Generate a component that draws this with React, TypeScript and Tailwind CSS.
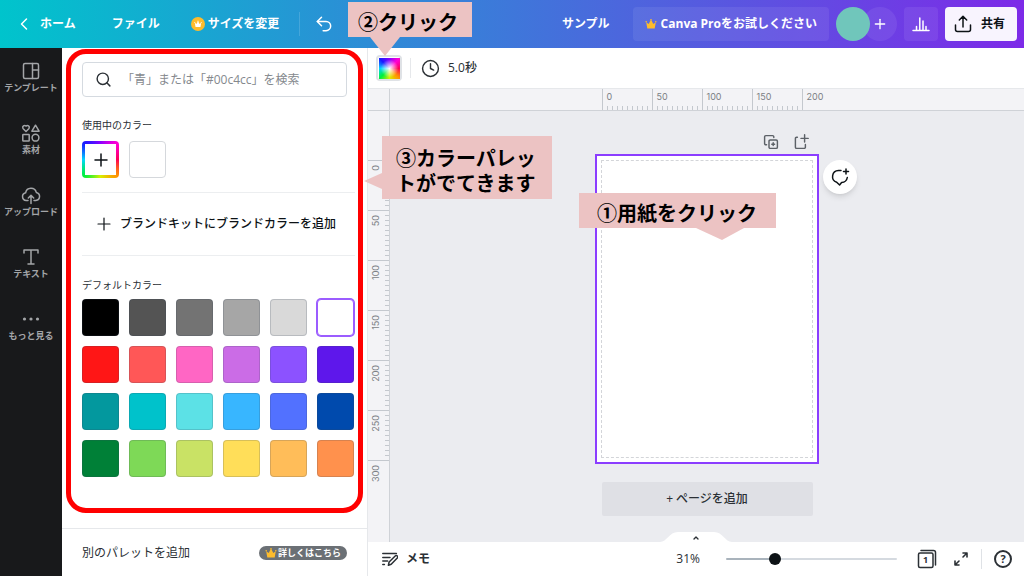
import type { ReactNode } from "react";
import { ChevronLeft, ChevronUp, Clock, Plus, Search, Undo2 } from "lucide-react";
import clsx from "clsx";

const spectrum =
  "bg-[conic-gradient(#8a00ff,#ff00d4_45deg,#ff0055_90deg,#ff9500_135deg,#d8f000_180deg,#00f03c_225deg,#00d5ff_270deg,#1a1aff_315deg,#8a00ff)]";

const rulerText = "font-[Inter,sans-serif] text-[9px] leading-4 text-[#7b7f85]";

const defaultColors = [
  { name: "ブラック", className: "bg-black" },
  { name: "ダークグレー", className: "bg-[#545454]" },
  { name: "グレー", className: "bg-[#737373]" },
  { name: "ミディアムグレー", className: "bg-[#a6a6a6]" },
  { name: "ライトグレー", className: "bg-[#d9d9d9]" },
  { name: "ホワイト", className: "bg-white", selected: true },
  { name: "レッド", className: "bg-[#ff1616]" },
  { name: "コーラルレッド", className: "bg-[#ff5757]" },
  { name: "ピンク", className: "bg-[#ff66c4]" },
  { name: "マゼンタ", className: "bg-[#cb6ce6]" },
  { name: "パープル", className: "bg-[#8c52ff]" },
  { name: "バイオレット", className: "bg-[#5e17eb]" },
  { name: "ダークターコイズ", className: "bg-[#03989e]" },
  { name: "アクアブルー", className: "bg-[#00c2cb]" },
  { name: "ターコイズブルー", className: "bg-[#5ce1e6]" },
  { name: "ライトブルー", className: "bg-[#38b6ff]" },
  { name: "ロイヤルブルー", className: "bg-[#5271ff]" },
  { name: "コバルトブルー", className: "bg-[#004aad]" },
  { name: "グリーン", className: "bg-[#008037]" },
  { name: "グラスグリーン", className: "bg-[#7ed957]" },
  { name: "ライム", className: "bg-[#c9e265]" },
  { name: "イエロー", className: "bg-[#ffde59]" },
  { name: "ピーチ", className: "bg-[#ffbd59]" },
  { name: "オレンジ", className: "bg-[#ff914d]" },
];

const navItems: { label: string; icon: ReactNode }[] = [
  {
    label: "テンプレート",
    icon: (
      <>
        <rect x="2.5" y="2.5" width="15" height="15" rx="1.5" />
        <path d="M11.5 2.5v15M11.5 9h6" />
      </>
    ),
  },
  {
    label: "素材",
    icon: (
      <>
        <path d="M5 8.5 2 5.4a1.9 1.9 0 0 1 3-2.3 1.9 1.9 0 0 1 3 2.3zM14.5 2.2l3.6 6h-7.2z" />
        <rect x="1.8" y="11.5" width="6.4" height="6.4" rx=".5" />
        <circle cx="14.5" cy="14.7" r="3.4" />
      </>
    ),
  },
  {
    label: "アップロード",
    icon: (
      <path d="M7 15.5H5.2a3.9 3.9 0 0 1-.6-7.7 5.5 5.5 0 0 1 10.7-.4 4.1 4.1 0 0 1-.5 8.1H13M10 18.5v-8M7.3 13 10 10.3l2.7 2.7" />
    ),
  },
  {
    label: "テキスト",
    icon: <path d="M3 6V3h14v3M10 3v14M7 17h6" />,
  },
  {
    label: "もっと見る",
    icon: (
      <g fill="currentColor" stroke="none">
        <circle cx="3.5" cy="10" r="1.6" />
        <circle cx="10" cy="10" r="1.6" />
        <circle cx="16.5" cy="10" r="1.6" />
      </g>
    ),
  },
];

function Icon({ className, children }: { className?: string; children: ReactNode }) {
  return (
    <svg
      viewBox="0 0 20 20"
      className={clsx("shrink-0", className)}
      fill="none"
      stroke="currentColor"
      strokeWidth="1.5"
      strokeLinecap="round"
      strokeLinejoin="round"
      aria-hidden="true"
    >
      {children}
    </svg>
  );
}

function Crown({ className }: { className?: string }) {
  return (
    <svg viewBox="0 0 12 12" className={clsx("shrink-0", className)} fill="currentColor" aria-hidden="true">
      <path d="M2.3 10.5 1.2 4.2l2.5 1.9L6 1.6l2.3 4.5 2.5-1.9-1.1 6.3z" />
      <circle cx="1.2" cy="3.8" r=".8" />
      <circle cx="6" cy="1.7" r=".8" />
      <circle cx="10.8" cy="3.8" r=".8" />
    </svg>
  );
}

function Callout({
  className,
  pointer,
  children,
}: {
  className: string;
  pointer: ReactNode;
  children: ReactNode;
}) {
  return (
    <div
      className={clsx(
        "absolute z-30 bg-[#ecc3c3] text-xl font-bold whitespace-nowrap text-black",
        className
      )}
    >
      {children}
      {pointer}
    </div>
  );
}

function Header() {
  return (
    <header className="flex h-12 items-center justify-between bg-[linear-gradient(to_right,#00c4cc,#7d2ae8)] pr-[7px] pl-3.5 text-xs font-bold text-white">
      <nav className="flex items-center">
        <a href="#home" className="flex items-center gap-1.5">
          <ChevronLeft className="size-5" strokeWidth={1.8} />
          ホーム
        </a>
        <button type="button" className="ml-9">
          ファイル
        </button>
        <button type="button" className="ml-8 flex items-center gap-1">
          <span className="flex size-3 items-center justify-center rounded-full bg-[#fdbc2c] ring-1 ring-[#fdbc2c]">
            <Crown className="size-2" />
          </span>
          サイズを変更
        </button>
        <span className="ml-5 h-6 w-px bg-white/15" />
        <button type="button" aria-label="元に戻す" className="ml-3.5">
          <Undo2 className="size-5" strokeWidth={1.8} />
        </button>
      </nav>

      <div className="flex items-center gap-[7px]">
        <span className="mr-4">サンプル</span>
        <button
          type="button"
          className="flex h-[34px] items-center gap-1 rounded bg-white/7 px-3"
        >
          <Crown className="size-3 text-[#fdbc2c]" />
          Canva Proをお試しください
        </button>
        <div className="flex">
          <span className="z-10 size-[34px] rounded-full bg-[#70c6bb]" />
          <button
            type="button"
            aria-label="メンバーを追加"
            className="-ml-[7px] flex size-[34px] items-center justify-center rounded-full bg-white/7"
          >
            <Plus className="size-4" />
          </button>
        </div>
        <button
          type="button"
          aria-label="インサイト"
          className="flex size-[34px] items-center justify-center rounded bg-white/7"
        >
          <Icon className="size-5">
            <path d="M2 16.5h16M5.500 16.5v-4M8.800 16.500V4M12 16.500V7M15 16.500v-4" />
          </Icon>
        </button>
        <button
          type="button"
          className="flex h-[34px] items-center gap-2 rounded bg-[#f8f4fe] px-2 pr-3 text-[#0d1216]"
        >
          <Icon className="size-5">
            <path d="M2.500 11v4.500a2 2 0 0 0 2 2h11a2 2 0 0 0 2-2V11M10 13V2.500M6.300 6 10 2.300 13.700 6" />
          </Icon>
          共有
        </button>
      </div>
    </header>
  );
}

function Sidebar() {
  return (
    <nav className="flex w-[62px] shrink-0 flex-col bg-[#18191b] pt-[13px]">
      {navItems.map((item) => (
        <button
          key={item.label}
          type="button"
          className="flex h-[62px] flex-col items-center gap-px text-[#a3a5a8]"
        >
          <Icon className="size-5">{item.icon}</Icon>
          <span className="text-[9px] leading-3 font-bold">{item.label}</span>
        </button>
      ))}
    </nav>
  );
}

function ColorPanel() {
  return (
    <aside className="flex w-[306px] shrink-0 flex-col border-r border-[#e6e8eb] bg-white text-[#0d1216]">
      <div className="relative flex-1 pt-3.5 pr-3 pb-11 pl-5">
        <label className="mr-2 flex h-[35px] items-center gap-2.5 rounded border border-[#d5dae0] pl-3">
          <Search className="size-[17px] shrink-0 text-[#2b3035]" />
          <input
            type="search"
            aria-label="カラーを検索"
            placeholder="「青」または「#00c4cc」を検索"
            className="min-w-0 flex-1 bg-transparent text-xs outline-none placeholder:text-[#85898e]"
          />
        </label>

        <h2 className="mt-5 text-[10px] leading-4 text-[#2b3035]">使用中のカラー</h2>
        <div className="mt-2 flex gap-2.5">
          <button
            type="button"
            aria-label="新しいカラーを追加"
            className={clsx("size-[37px] rounded p-[3px]", spectrum)}
          >
            <span className="flex size-full items-center justify-center bg-white">
              <Icon className="size-5">
                <path d="M10 4v12M4 10h12" />
              </Icon>
            </span>
          </button>
          <button
            type="button"
            aria-label="ホワイト"
            className="size-[37px] rounded border border-[#d5d8dc] bg-white"
          />
        </div>

        <div className="mt-3.5 border-y border-[#eceef0]">
          <button
            type="button"
            className="flex h-[62px] w-full items-center gap-1.5 pl-3 text-xs font-medium"
          >
            <Icon className="size-5">
              <path d="M10 4v12M4 10h12" strokeWidth="1.2" />
            </Icon>
            ブランドキットにブランドカラーを追加
          </button>
        </div>

        <h2 className="mt-[21px] text-[10px] leading-4 text-[#2b3035]">デフォルトカラー</h2>
        <div className="mt-1.5 grid grid-cols-[repeat(6,37px)] gap-2.5">
          {defaultColors.map((color) => (
            <button
              key={color.name}
              type="button"
              aria-label={color.name}
              className={clsx(
                "h-[37px] rounded border",
                color.className,
                color.selected
                  ? "border-[#9b5cff] ring-1 ring-[#9b5cff]"
                  : "border-[#39475b]/20"
              )}
            />
          ))}
        </div>

        <div className="pointer-events-none absolute inset-x-1 top-px bottom-[15px] rounded-[20px] border-[5px] border-[#ff0000]">
          <Callout
            className="top-[82px] left-full ml-6 w-[170px] pt-2.5 pb-[3px] pl-3.5 leading-[25px]"
            pointer={
              <svg
                viewBox="0 0 18 16"
                className="absolute top-[37px] right-full h-4 w-[18px]"
                fill="#ecc3c3"
                aria-hidden="true"
              >
                <path d="M18 0v16L0 8z" />
              </svg>
            }
          >
            ③カラーパレッ
            <br />
            トがでてきます
          </Callout>
        </div>
      </div>

      <div className="flex h-12 items-center justify-between border-t border-[#e6e8eb] pr-5 pl-5">
        <span className="text-xs text-[#2b3035]">別のパレットを追加</span>
        <button
          type="button"
          className="flex h-3.5 items-center gap-px rounded-full bg-[#6b7075] px-1.5 text-[9px] leading-3 font-bold text-white"
        >
          <Crown className="size-3 text-[#fdbc2c]" />
          詳しくはこちら
        </button>
      </div>
    </aside>
  );
}

function Toolbar() {
  return (
    <div className="flex h-[41px] items-center border-b border-[#e6e8eb] bg-white pl-2">
      <div className="relative">
        <button
          type="button"
          aria-label="背景のカラー"
          className="flex size-[26px] items-center justify-center rounded-sm border-2 border-[#dfe2e6]"
        >
          <span className={clsx("size-[21px] shrink-0", spectrum)}>
            <span className="block size-full bg-[radial-gradient(circle,white,transparent_60%)]" />
          </span>
        </button>
        <Callout
          className="bottom-full -left-7 mb-[18px] w-[124px] pt-[7px] pb-px pl-2.5 leading-[27px]"
          pointer={
            <svg
              viewBox="0 0 30 19"
              className="absolute top-full left-[22px] h-[19px] w-[30px]"
              fill="#ecc3c3"
              aria-hidden="true"
            >
              <path d="M0 0h30L15 19z" />
            </svg>
          }
        >
          ②クリック
        </Callout>
      </div>
      <span className="ml-2 h-5 w-px bg-[#e6e8eb]" />
      <button
        type="button"
        className="ml-2.5 flex items-center gap-2 text-xs font-medium text-[#2b3035]"
      >
        <Clock className="size-[19px]" strokeWidth={1.8} />
        5.0秒
      </button>
    </div>
  );
}

function HorizontalRuler() {
  return (
    <div className={clsx("flex h-[22px] border-b border-[#cfd2d7] bg-[#f3f3f6]", rulerText)}>
      <div className="w-[22px] shrink-0 border-r border-[#cfd2d7]" />
      <div className="flex flex-1 justify-center">
        <div className="flex w-[211px]">
          {[0, 50, 100, 150, 200].map((mark) => (
            <div
              key={mark}
              className="flex w-[50px] shrink-0 flex-col justify-between border-l border-[#c4c8ce]"
            >
              <span className="pl-1">{mark}</span>
              {mark < 200 && (
                <span className="h-1 bg-[repeating-linear-gradient(to_right,transparent_0_4px,#c4c8ce_4px_5px)]" />
              )}
            </div>
          ))}
        </div>
      </div>
    </div>
  );
}

function VerticalRuler() {
  return (
    <div
      className={clsx(
        "flex w-[22px] shrink-0 flex-col border-r border-[#cfd2d7] bg-[#f3f3f6] pt-[49px]",
        rulerText
      )}
    >
      {[0, 50, 100, 150, 200, 250, 300].map((mark) => (
        <div
          key={mark}
          className="flex h-[50px] shrink-0 justify-between border-t border-[#c4c8ce]"
        >
          <span className="rotate-180 self-start pb-1 [writing-mode:vertical-rl]">{mark}</span>
          {mark < 300 && (
            <span className="w-1 bg-[repeating-linear-gradient(to_bottom,transparent_0_4px,#c4c8ce_4px_5px)]" />
          )}
        </div>
      ))}
    </div>
  );
}

function Stage() {
  return (
    <div className="flex flex-1 flex-col items-center bg-[#ebecf0] pt-[23px] pb-[25px]">
      <div className="flex w-[211px] justify-end gap-3.5 pr-1 text-[#5c6167]">
        <button type="button" aria-label="ページを複製">
          <Icon className="size-4">
            <rect x="7.5" y="7.5" width="10.5" height="10.5" rx="1.5" strokeWidth="1.8" />
            <path
              d="M4.500 13.500h-1a1.500 1.500 0 0 1-1.500-1.500V3.500A1.500 1.500 0 0 1 3.500 2H12a1.500 1.500 0 0 1 1.500 1.500v1M12.750 11v3.500M11 12.750h3.500"
              strokeWidth="1.8"
            />
          </Icon>
        </button>
        <button type="button" aria-label="ページを追加">
          <Icon className="size-4">
            <path
              d="M5.500 4H4.500A1.500 1.500 0 0 0 3 5.500v11A1.500 1.500 0 0 0 4.500 18h9.500a1.500 1.500 0 0 0 1.500-1.500V13M14.500 1v9M10 5.500h9"
              strokeWidth="1.8"
            />
          </Icon>
        </button>
      </div>

      <div className="relative mt-1 h-[310px] w-[224px] border-2 border-[#8b3dff] bg-white p-1">
        <div className="size-full border border-dashed border-[#d3d5d9]" />
        <button
          type="button"
          aria-label="コメントを追加"
          className="absolute top-1 left-full ml-1.5 flex size-[34px] items-center justify-center rounded-full bg-white text-[#0d1216] shadow-md"
        >
          <Icon className="size-5">
            <path d="M11 3.500H8.500a6 6 0 0 0-1.800 11.700L9.600 18l2-2.500a6 6 0 0 0 5.700-5M16 2v5M13.500 4.500h5" />
          </Icon>
        </button>
        <Callout
          className="top-[37px] -left-[18px] w-[197px] pt-[7px] pb-px pl-[18px] leading-[27px]"
          pointer={
            <svg
              viewBox="0 0 48 12"
              className="absolute top-full right-8 h-3 w-12"
              fill="#ecc3c3"
              aria-hidden="true"
            >
              <path d="M0 0h48L26 12z" />
            </svg>
          }
        >
          ①用紙をクリック
        </Callout>
      </div>

      <button
        type="button"
        className="mt-[18px] h-[34px] w-[211px] rounded-xs bg-[#dfe0e5] text-xs font-medium text-[#2b3035]"
      >
        + ページを追加
      </button>
    </div>
  );
}

function BottomBar() {
  return (
    <div className="relative flex h-[34px] items-center bg-white pr-3 pl-3.5 text-xs text-[#2b3035]">
      <button
        type="button"
        aria-label="ページ一覧を表示"
        className="absolute bottom-full left-1/2 h-2.5 w-[72px] -translate-x-1/2"
      >
        <svg viewBox="0 0 72 10" className="h-2.5 w-[72px]" fill="white" aria-hidden="true">
          <path d="M0 10C7 10 9 0 18 0h36c9 0 11 10 18 10z" />
        </svg>
        <ChevronUp className="absolute top-0.5 left-8 size-2" strokeWidth={4} />
      </button>

      <button type="button" className="flex items-center gap-2 font-bold">
        <Icon className="size-4">
          <path
            d="M1 3h17M1 8h9M1 12.500h6M1 17h2M8 17.800l.9-4 7.600-7.600a1.700 1.700 0 0 1 2.600 2.600L11.500 16.500z"
            strokeWidth="1.9"
          />
        </Icon>
        メモ
      </button>

      <output htmlFor="zoom" className="ml-auto font-medium">
        31%
      </output>
      <input
        id="zoom"
        type="range"
        aria-label="ズーム"
        min={0}
        max={100}
        defaultValue={27}
        className="ml-[26px] h-3 w-[171px] appearance-none bg-transparent [&::-webkit-slider-runnable-track]:h-0.5 [&::-webkit-slider-runnable-track]:rounded-full [&::-webkit-slider-runnable-track]:bg-[linear-gradient(to_right,#a9b3bc_29%,#d5dae0_29%)] [&::-webkit-slider-thumb]:-mt-[5px] [&::-webkit-slider-thumb]:size-3 [&::-webkit-slider-thumb]:appearance-none [&::-webkit-slider-thumb]:rounded-full [&::-webkit-slider-thumb]:bg-[#0d1216]"
      />
      <button type="button" aria-label="グリッドビュー" className="ml-5 flex">
        <span className="relative flex size-5 items-end">
          <Icon className="absolute inset-0 size-5">
            <rect x="1.5" y="4" width="14.5" height="14.5" rx="1.5" />
            <path d="M4 1.500h12.500a2 2 0 0 1 2 2V16" />
          </Icon>
          <span className="w-[17px] text-center text-[9px] leading-[18px] font-bold">1</span>
        </span>
      </button>
      <button type="button" aria-label="全画面表示" className="ml-4">
        <Icon className="size-4">
          <path
            d="M12.500 2.500h5v5M17.500 2.500l-5 5M7.500 17.500h-5v-5M2.500 17.500l5-5"
            strokeWidth="2"
          />
        </Icon>
      </button>
      <span className="mx-3 h-5 w-px bg-[#dfe2e6]" />
      <button
        type="button"
        className="flex size-[18px] items-center justify-center rounded-full border-2 border-[#2b3035] text-[11px] leading-3 font-bold"
      >
        ?
      </button>
    </div>
  );
}

export default function App() {
  return (
    <div className="flex min-h-screen flex-col overflow-hidden bg-white font-['Open_Sans','Noto_Sans_CJK_JP',sans-serif]">
      <Header />
      <div className="flex flex-1">
        <Sidebar />
        <ColorPanel />
        <main className="flex min-w-0 flex-1 flex-col">
          <Toolbar />
          <HorizontalRuler />
          <div className="flex flex-1">
            <VerticalRuler />
            <Stage />
          </div>
          <BottomBar />
        </main>
      </div>
    </div>
  );
}
